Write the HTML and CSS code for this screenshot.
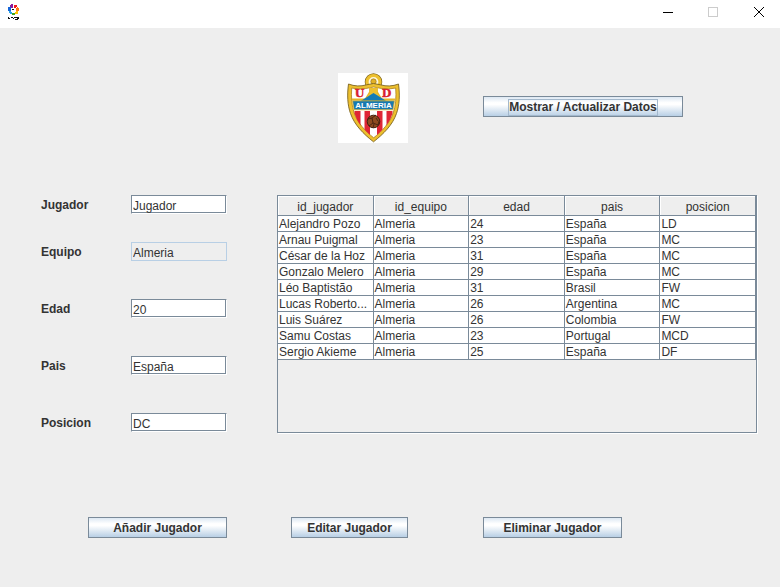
FILE: index.html
```html
<!DOCTYPE html>
<html lang="es">
<head>
<meta charset="utf-8">
<title>Jugadores</title>
<link rel="stylesheet" href="styles.css">
</head>
<body>
<header class="titlebar">
  <svg class="app-icon" width="12" height="16" viewBox="0 0 12 16" shape-rendering="crispEdges" aria-hidden="true">
    <path fill="#8a1a9b" d="M3 0h2v4H3V3H2V1h1z"/>
    <path fill="#f01420" d="M6 1h3v2H8v1H6z"/>
    <path fill="#ff7a12" d="M9 3h1v1h1v3H8V4h1z"/>
    <path fill="#ffc400" d="M8 7h2v3H7V8h1z"/>
    <path fill="#43a51c" d="M4 9h3v2H4z"/>
    <path fill="#28a4e8" d="M1 7h2v1h1v2H2V9H1z"/>
    <path fill="#1565d8" d="M0 3h3v4H0z"/>
    <path fill="#111" d="M4 5h2v1H4zM0 13h1v2H0zM3 13h2v1H3zM5 14h1v1H5zM6 13h2v1H6zM8 13h3v1H8zM9 14h2v1H9zM1 14h1v1H1zM7 15h3v1H7z"/>
  </svg>
  <div class="window-controls">
    <button type="button" aria-label="Minimizar"><svg width="12" height="12" viewBox="0 0 12 12" shape-rendering="crispEdges"><path d="M2 6.500h10" stroke="#000"/></svg></button>
    <button type="button" aria-label="Maximizar" disabled><svg width="12" height="12" viewBox="0 0 12 12" shape-rendering="crispEdges"><path d="M1.500 1.500h9v9h-9z" fill="none" stroke="#ccc"/></svg></button>
    <button type="button" aria-label="Cerrar"><svg width="12" height="12" viewBox="0 0 12 12"><path d="M1 1l10 10M11 1L1 11" stroke="#000"/></svg></button>
  </div>
</header>
<main class="content">
  <div class="top">
    <svg class="crest" width="70" height="70" viewBox="0 0 70 70" role="img" aria-label="UD Almeria">
      <rect width="70" height="70" fill="#fff"/>
      <circle cx="35.500" cy="9" r="6.500" fill="#fff" stroke="#7d6420" stroke-width="4.500"/>
      <circle cx="35.500" cy="9" r="6.500" fill="#fff7d8" stroke="#edc02e" stroke-width="3.200"/>
      <circle cx="35.500" cy="8.500" r="2.700" fill="#e2b126" stroke="#8a6a1c" stroke-width=".6"/>
      <path d="M10.500 11q9 3.500 18 .8l7-1.300 7 1.300q9 2.700 18-.8c1.500 11 1 21-2 29.500-4 11.500-13 20.500-23 28.300-10-7.800-19-16.800-23-28.300-3-8.500-3.500-18.500-2-29.500z" fill="#edc02e" stroke="#7d6420" stroke-width=".9"/>
      <path d="M13.700 15q7 1.800 14 .5l8-1.500 8 1.500q7 1.300 14-.5c.7 9 0 18-2.500 25-3.300 9.800-11 18-19.500 24.800-8.500-6.800-16.200-15-19.500-24.800-2.500-7-3.200-16-2.500-25z" fill="#fff" stroke="#a97f20" stroke-width=".8"/>
      <path d="M16.500 38h6v14.500q-4-5.500-6-12zM26.500 38h5.500v24q-3-2.500-5.500-5.500zM39 38h5.500v18.500q-2.500 3-5.500 5.500zM48.500 38h6v2.500q-2 6.500-6 12z" fill="#df2635"/>
      <path d="M14 26.500h13.500L32 19v-4.500M39 14.500V19l4.500 7.500h13.500" fill="none" stroke="#e6b527" stroke-width="1.800"/>
      <path d="M32 15h7v5l4 6-7.500-5-7.500 5 4-6z" fill="#edc02e"/>
      <path d="M35.500 20L50 29H21z" fill="#147bb5"/>
      <path d="M14.500 27.800h42l-1.500 9H16z" fill="#1679b1" stroke="#e6b527" stroke-width=".8"/>
      <text class="crest-initial" x="21.500" y="24" text-anchor="middle">U</text>
      <text class="crest-initial" x="48.500" y="24" text-anchor="middle">D</text>
      <text class="crest-name" x="35.500" y="35" text-anchor="middle">ALMERIA</text>
      <circle cx="35.500" cy="48.500" r="6.300" fill="#8d4b20" stroke="#40200f"/>
      <path d="M30 46l4-1 4-3M34 45l1 5 5 2 1-4M35 50l-4 3M40 48l-2-3M36 51l-1 4" fill="none" stroke="#3a1d0e" stroke-width=".8"/>
    </svg>
    <button type="button" class="btn btn-show"><span class="focus">Mostrar / Actualizar Datos</span></button>
  </div>
  <div class="middle">
    <form class="fields">
      <div class="field first"><label for="jugador">Jugador</label><input id="jugador" type="text" value="Jugador"></div>
      <div class="field"><label for="equipo">Equipo</label><input id="equipo" class="locked" type="text" value="Almeria" readonly></div>
      <div class="field"><label for="edad">Edad</label><input id="edad" type="text" value="20"></div>
      <div class="field"><label for="pais">Pais</label><input id="pais" type="text" value="España"></div>
      <div class="field"><label for="posicion">Posicion</label><input id="posicion" type="text" value="DC"></div>
    </form>
    <div class="table-pane">
      <table>
        <thead><tr><th>id_jugador</th><th>id_equipo</th><th>edad</th><th>pais</th><th>posicion</th></tr></thead>
        <tbody>
          <tr><td>Alejandro Pozo</td><td>Almeria</td><td>24</td><td>España</td><td>LD</td></tr>
          <tr><td>Arnau Puigmal</td><td>Almeria</td><td>23</td><td>España</td><td>MC</td></tr>
          <tr><td>César de la Hoz</td><td>Almeria</td><td>31</td><td>España</td><td>MC</td></tr>
          <tr><td>Gonzalo Melero</td><td>Almeria</td><td>29</td><td>España</td><td>MC</td></tr>
          <tr><td>Léo Baptistão</td><td>Almeria</td><td>31</td><td>Brasil</td><td>FW</td></tr>
          <tr><td>Lucas Roberto...</td><td>Almeria</td><td>26</td><td>Argentina</td><td>MC</td></tr>
          <tr><td>Luis Suárez</td><td>Almeria</td><td>26</td><td>Colombia</td><td>FW</td></tr>
          <tr><td>Samu Costas</td><td>Almeria</td><td>23</td><td>Portugal</td><td>MCD</td></tr>
          <tr><td>Sergio Akieme</td><td>Almeria</td><td>25</td><td>España</td><td>DF</td></tr>
        </tbody>
      </table>
    </div>
  </div>
  <div class="actions">
    <button type="button" class="btn">Añadir Jugador</button>
    <button type="button" class="btn btn-edit">Editar Jugador</button>
    <button type="button" class="btn btn-delete">Eliminar Jugador</button>
  </div>
</main>
</body>
</html>
```
FILE: styles.css
```css
:root {
  --line: #7a8a99;
  --panel: #eeeeee;
  --text: #333333;
}

* { box-sizing: border-box; }

body {
  margin: 0;
  min-height: 100vh;
  background: var(--panel);
  color: var(--text);
  font: 12px/15px "Liberation Sans", Arial, sans-serif;
}

.titlebar {
  display: flex;
  justify-content: space-between;
  align-items: flex-start;
  height: 28px;
  padding-left: 8px;
  background: #fff;
}

.app-icon { margin-top: 4px; }

.window-controls { display: flex; }

.window-controls button {
  display: grid;
  place-items: center;
  width: 46px;
  height: 24px;
  padding: 0 0 0 4px;
  border: 0;
  background: none;
}

.content { padding: 45px 23px 24px 41px; }

.top {
  display: flex;
  align-items: center;
  gap: 75px;
  padding-left: 297px;
}

.crest { display: block; flex: none; }

.crest-initial {
  font: bold 11px "DejaVu Serif", serif;
  fill: #d91f30;
  stroke: #d91f30;
  stroke-width: 0.4;
}

.crest-name {
  font: bold 8px "Liberation Sans", Arial, sans-serif;
  fill: #fff;
}

.btn {
  height: 21px;
  min-width: 139px;
  padding: 2px 12px 0;
  border: 1px solid var(--line);
  background: linear-gradient(#dde8f3, #ffffff 30%, #ffffff 40%, #b8cfe5);
  color: var(--text);
  font: bold 12px/15px "Liberation Sans", Arial, sans-serif;
  white-space: nowrap;
}

.btn-show {
  min-width: 200px;
  margin-bottom: 3px;
}

.focus {
  display: inline-block;
  outline: 1px solid #a3b8cc;
}

.middle {
  display: grid;
  grid-template-columns: 186px 1fr;
  gap: 50px;
  margin-top: 52px;
}

.fields {
  display: flex;
  flex-direction: column;
  gap: 38px;
}

.first { margin-bottom: -10px; }

.field {
  display: grid;
  grid-template-columns: 90px 1fr;
  align-items: center;
}

.field label {
  padding-top: 2px;
  font-weight: bold;
}

.field input {
  width: 100%;
  height: 19px;
  padding: 3px 1px 0;
  border: 1px solid var(--line);
  border-right-color: #fff;
  border-bottom-color: #fff;
  border-radius: 0;
  box-shadow: inset -1px -1px var(--line);
  background: #fff;
  color: var(--text);
  font: inherit;
}

.field .locked {
  border-color: #b8cfe5;
  box-shadow: none;
  background: var(--panel);
}

.table-pane {
  height: 238px;
  border: 1px solid var(--line);
  box-shadow: 1px 1px #fff;
}

table {
  width: 100%;
  table-layout: fixed;
  border-collapse: separate;
  border-spacing: 0;
}

th, td {
  overflow: hidden;
  border: solid var(--line);
  border-width: 0 1px 1px 0;
  white-space: nowrap;
}

th {
  height: 20px;
  padding: 3px 0 0;
  box-shadow: inset 1px 1px #fff;
  font-weight: normal;
}

td {
  height: 16px;
  padding: 1px 1px 0;
  background: #fff;
  line-height: 14px;
}

.actions {
  display: flex;
  margin-top: 84px;
  padding-left: 47px;
}

.btn-edit {
  min-width: 117px;
  margin: 0 75px 0 64px;
}
```
